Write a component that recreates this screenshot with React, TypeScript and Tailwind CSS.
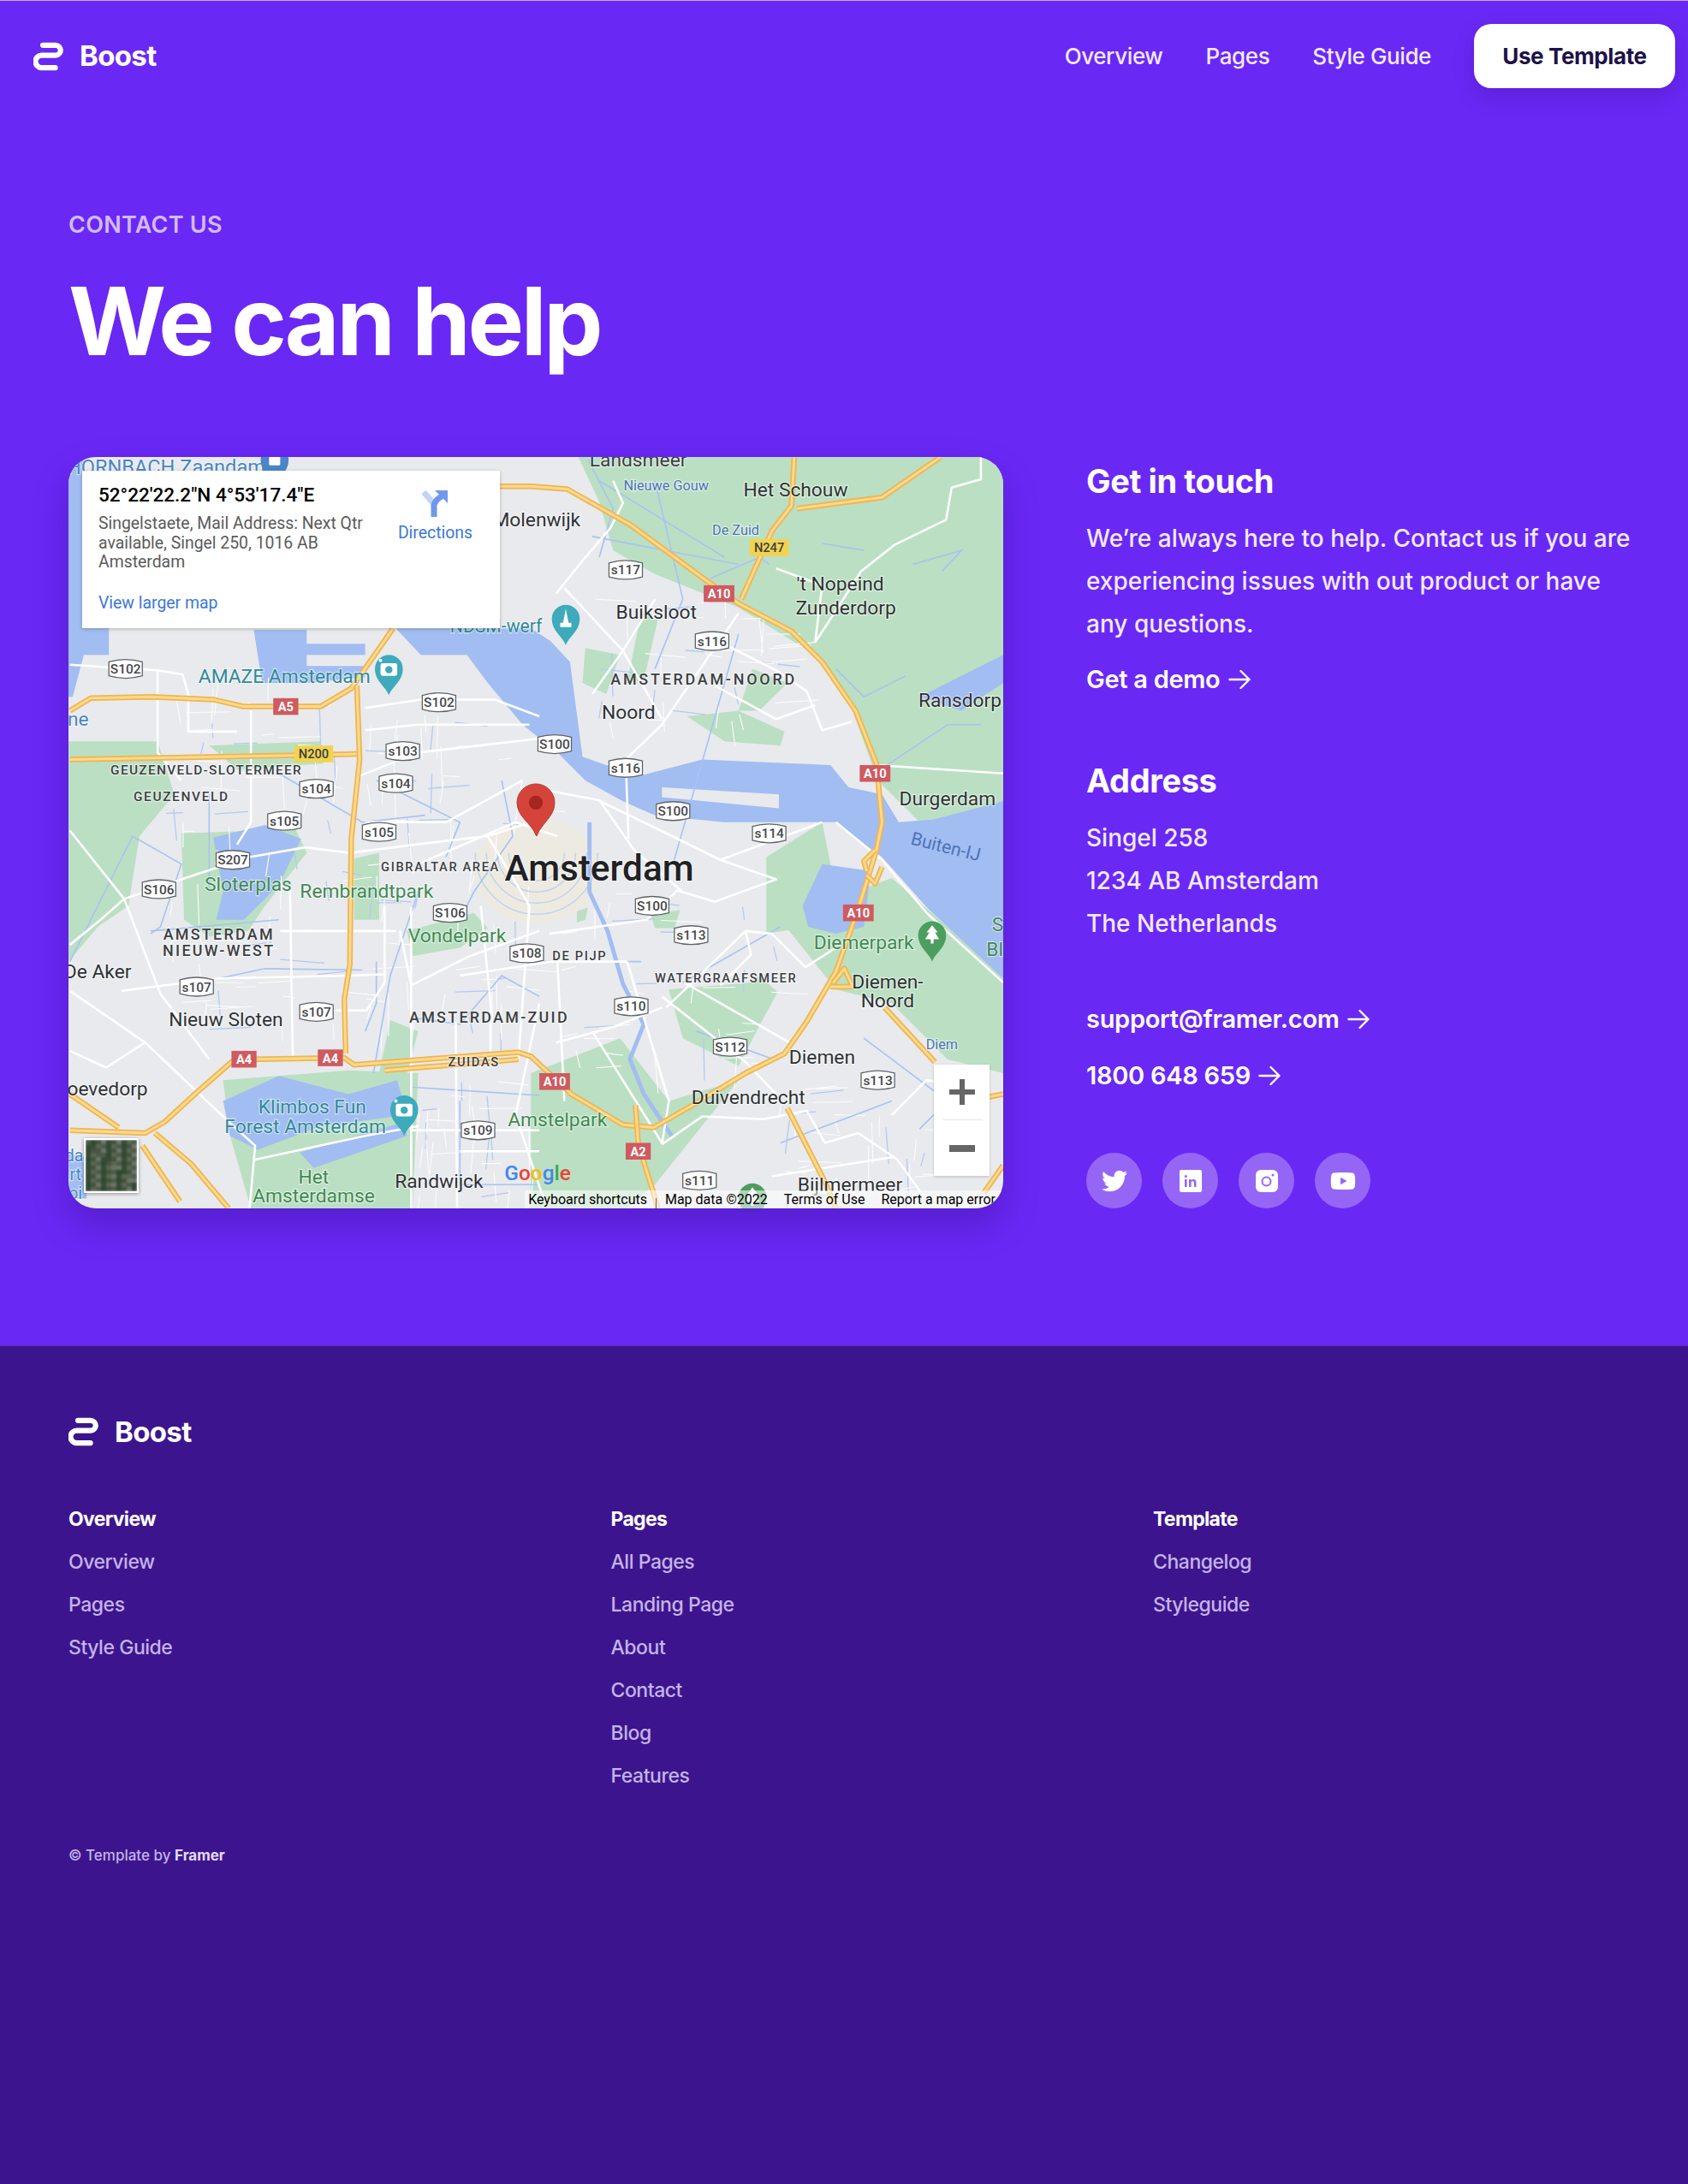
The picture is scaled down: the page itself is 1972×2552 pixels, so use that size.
import React from 'react';
import { FaTwitter, FaYoutube } from 'react-icons/fa';

type Pts = number[];

const toPoints = (p: Pts) => {
  const out: string[] = [];
  for (let i = 0; i < p.length; i += 2) out.push(`${p[i]},${p[i + 1]}`);
  return out.join(' ');
};

// map geometry is in the coordinates of a 1212px wide picture, see viewBox
const greens: Pts[] = [
  [415, 328, 720, 328, 720, 580, 660, 590, 630, 560, 610, 505, 585, 470, 530, 436, 470, 412, 440, 395, 430, 360],
  [49, 532, 113, 532, 125, 570, 100, 600, 92, 650, 70, 665, 49, 690],
  [150, 535, 230, 532, 232, 548, 170, 552],
  [130, 598, 212, 595, 220, 612, 190, 650, 178, 668, 150, 672, 132, 660],
  [254, 616, 272, 612, 272, 660, 254, 660],
  [292, 668, 340, 655, 350, 666, 330, 680, 296, 686],
  [160, 775, 250, 768, 300, 770, 296, 867, 180, 867, 165, 815],
  [280, 732, 300, 740, 292, 770, 272, 770],
  [381, 770, 445, 745, 480, 790, 530, 775, 470, 850, 450, 867, 381, 867],
  [480, 710, 540, 705, 548, 730, 530, 765, 490, 745],
  [515, 725, 545, 700, 558, 712, 540, 745],
  [560, 660, 640, 630, 720, 700, 720, 770, 680, 760, 640, 720, 600, 710],
  [414, 654, 422, 651, 420, 660, 414, 662],
  [467, 656, 488, 653, 484, 666, 470, 666],
  [460, 440, 472, 445, 462, 488, 450, 490],
  [420, 465, 445, 470, 435, 498, 418, 490],
  [493, 514, 530, 510, 563, 525, 560, 535, 520, 532],
  [540, 480, 565, 490, 545, 510, 530, 510],
  [550, 615, 590, 590, 600, 640, 580, 665, 550, 670],
];

const waters: Pts[] = [
  [49, 328, 60, 328, 60, 400, 78, 440, 78, 470, 60, 470, 52, 500, 49, 500],
  [182, 452, 220, 452, 220, 462, 262, 462, 262, 470, 220, 470, 220, 478, 262, 478, 262, 486, 220, 490, 188, 490],
  [284, 451, 381, 451, 395, 460, 409, 475, 418, 543, 458, 557, 504, 545, 596, 549, 609, 565, 633, 570, 645, 590, 670, 588, 720, 575, 720, 702, 666, 652, 633, 615, 612, 600, 600, 590, 520, 590, 470, 585, 447, 575, 420, 560, 400, 540, 375, 520, 350, 490, 335, 470, 302, 470],
  [590, 620, 625, 625, 620, 665, 600, 670, 580, 665, 576, 650],
  [153, 601, 190, 592, 216, 602, 200, 635, 175, 660, 155, 660, 160, 640],
  [160, 790, 200, 772, 250, 785, 285, 775, 292, 800, 230, 808, 185, 825, 165, 815],
  [215, 827, 290, 805, 292, 815, 225, 838],
  [50, 860, 62, 860, 62, 830, 49, 828],
  [660, 500, 720, 470, 720, 490, 690, 510],
];

const canals: Pts[] = [
  [422, 330, 440, 365, 430, 400],
  [430, 345, 520, 400],
  [470, 345, 490, 430, 470, 480],
  [425, 385, 530, 405],
  [510, 415, 545, 400, 552, 405],
  [590, 390, 620, 395],
  [655, 405, 690, 395, 676, 410],
  [600, 480, 620, 500, 650, 485],
  [620, 560, 680, 520, 704, 520],
  [483, 620, 530, 455],
  [50, 690, 95, 600, 130, 620, 115, 665, 108, 670],
  [108, 668, 200, 660],
  [157, 702, 190, 695, 260, 696],
  [295, 730, 330, 735, 360, 700, 387, 715],
  [300, 640, 280, 700, 268, 770],
  [270, 690, 270, 720, 262, 740],
  [150, 570, 150, 640],
  [200, 555, 260, 590, 305, 585],
  [270, 560, 330, 590, 320, 615],
  [360, 560, 368, 600, 340, 640, 330, 660],
  [295, 780, 387, 786],
  [330, 790, 330, 850, 387, 850],
  [490, 705, 560, 665],
  [500, 740, 555, 760],
  [390, 690, 460, 690],
  [560, 820, 640, 790],
  [620, 745, 680, 790, 660, 810],
];

const whiteRoads: Pts[] = [
  [50, 477, 113, 481, 131, 484, 135, 498],
  [262, 508, 302, 502, 355, 502, 387, 514],
  [113, 481, 113, 540, 130, 560],
  [180, 510, 180, 590, 170, 606],
  [135, 498, 135, 525, 170, 525],
  [262, 524, 300, 520, 380, 520],
  [300, 540, 387, 530],
  [255, 558, 300, 540],
  [262, 590, 320, 590, 375, 560],
  [50, 678, 72, 660, 89, 645, 142, 627, 179, 615, 219, 608, 251, 612, 306, 605, 350, 600, 381, 590],
  [87, 711, 157, 702, 251, 700, 276, 699],
  [201, 668, 284, 668],
  [208, 637, 210, 760],
  [50, 596, 89, 645, 115, 713, 150, 760],
  [50, 711, 104, 748, 162, 803, 183, 822, 179, 867],
  [104, 748, 76, 766, 50, 754],
  [241, 725, 263, 725, 276, 705, 276, 650],
  [295, 707, 337, 686, 387, 668],
  [295, 651, 295, 867],
  [327, 733, 328, 867],
  [287, 668, 295, 707],
  [295, 811, 387, 811],
  [330, 826, 387, 826],
  [183, 832, 262, 815, 300, 808],
  [300, 620, 370, 590, 400, 600],
  [350, 600, 380, 650, 372, 760],
  [345, 650, 352, 720, 352, 760],
  [387, 720, 370, 800, 390, 860],
  [330, 700, 395, 690, 450, 690],
  [530, 440, 475, 520, 449, 545, 451, 602],
  [405, 422, 447, 467, 475, 516],
  [521, 463, 557, 481, 579, 496, 590, 524, 611, 518],
  [513, 492, 557, 516, 585, 506],
  [425, 498, 447, 467, 470, 430],
  [399, 426, 420, 400, 438, 379, 447, 361, 440, 345],
  [557, 408, 590, 420, 585, 461],
  [642, 391, 679, 373, 683, 350, 704, 344, 704, 328],
  [642, 391, 618, 410, 600, 438, 585, 461],
  [629, 549, 720, 555],
  [600, 590, 633, 617, 666, 656, 720, 705],
  [381, 565, 429, 574, 517, 617, 557, 631, 513, 647, 486, 639, 464, 660, 394, 670],
  [430, 574, 455, 610, 490, 640],
  [517, 617, 590, 590],
  [478, 723, 535, 668, 539, 685, 517, 707],
  [491, 705, 570, 750],
  [535, 668, 554, 670, 578, 694, 600, 680],
  [475, 715, 535, 762, 557, 785],
  [399, 748, 440, 737, 475, 723],
  [400, 690, 405, 790],
  [475, 821, 504, 801, 548, 803, 579, 797, 592, 820, 616, 813, 644, 832, 664, 860],
  [554, 844, 642, 830],
  [450, 690, 480, 790, 475, 821],
  [600, 845, 600, 867],
  [640, 800, 665, 775, 700, 780],
  [425, 740, 475, 820],
];

const roads: Pts[] = [
  [358, 349, 381, 349, 407, 351, 453, 377, 506, 416, 530, 433, 568, 453, 590, 475, 614, 510, 629, 548, 633, 590, 629, 610, 616, 652, 600, 697, 579, 733, 563, 756, 535, 770, 497, 793, 469, 809, 447, 807, 410, 785, 381, 758, 372, 755, 306, 760, 254, 764, 247, 759, 183, 760, 166, 762, 142, 783, 118, 805, 104, 813, 50, 811],
  [50, 510, 65, 501, 109, 500, 153, 502, 175, 507, 230, 507, 252, 494, 282, 451],
  [50, 545, 212, 542, 256, 541],
  [256, 492, 258, 545, 252, 602, 251, 692, 247, 717, 248, 756],
  [570, 328, 568, 363, 554, 381, 532, 430],
  [572, 365, 633, 357, 675, 328],
  [50, 785, 85, 809],
  [111, 813, 137, 835, 164, 867],
  [102, 822, 129, 862],
  [456, 793, 458, 821, 469, 856, 472, 867],
  [565, 795, 592, 848, 600, 867],
  [635, 723, 671, 762],
  [720, 836, 706, 856],
  [710, 787, 720, 785],
  [276, 768, 350, 762, 372, 760],
  [622, 625, 620, 618, 628, 610],
  [633, 622, 628, 634, 622, 628],
  [598, 705, 606, 695, 612, 708, 596, 708],
];

type Label = [number, number, string, number, string?, number?, number?];
const dark = '#3c4043';
const ink = '#2f3235';
const park = '#3f8a53';
const poi = '#2f8a9a';
const water = '#4a74b8';
const transit = '#4a86c8';

// x centre, baseline, text, size, colour, weight, letter spacing
const labels: Label[] = [
  [119, 340, 'HORNBACH Zaandam', 14.5, transit],
  [458, 335, 'Landsmeer', 14, dark],
  [478, 352, 'Nieuwe Gouw', 10, water],
  [528, 384, 'De Zuid', 10, water],
  [571, 356, 'Het Schouw', 14, ink],
  [385, 378, 'Molenwijk', 14, ink],
  [603, 424, "'t Nopeind", 14, ink],
  [607, 441, 'Zunderdorp', 14, ink],
  [471, 444, 'Buiksloot', 14, ink],
  [505, 491, 'AMSTERDAM-NOORD', 11, dark, 500, 1.7],
  [451, 516, 'Noord', 14, ink],
  [689, 507, 'Ransdorp', 14, ink],
  [680, 578, 'Durgerdam', 14, ink],
  [356, 454, 'NDSM-werf', 13, poi],
  [204, 490, 'AMAZE Amsterdam', 14, poi],
  [148, 556, 'GEUZENVELD-SLOTERMEER', 9.5, dark, 500, 0.8],
  [130, 575, 'GEUZENVELD', 9.5, dark, 500, 1],
  [178, 639, 'Sloterplas', 14, park],
  [263, 644, 'Rembrandtpark', 14, park],
  [316, 625, 'GIBRALTAR AREA', 9, dark, 500, 1],
  [430, 632, 'Amsterdam', 26, '#202124', 500],
  [328, 676, 'Vondelpark', 14, park],
  [157, 674, 'AMSTERDAM', 11, dark, 500, 1.4],
  [157, 686, 'NIEUW-WEST', 11, dark, 500, 1.4],
  [70, 702, 'De Aker', 14, ink],
  [162, 736, 'Nieuw Sloten', 14, ink],
  [351, 734, 'AMSTERDAM-ZUID', 11, dark, 500, 1.4],
  [416, 689, 'DE PIJP', 9, dark, 500, 1],
  [521, 705, 'WATERGRAAFSMEER', 9, dark, 500, 1],
  [340, 765, 'ZUIDAS', 9, dark, 500, 1],
  [77, 786, 'oevedorp', 14, ink],
  [224, 799, 'Klimbos Fun', 14, poi],
  [219, 813, 'Forest Amsterdam', 14, poi],
  [225, 849, 'Het', 14, park],
  [225, 863, 'Amsterdamse', 14, park],
  [315, 852, 'Randwijck', 14, ink],
  [400, 808, 'Amstelpark', 14, park],
  [537, 792, 'Duivendrecht', 14, ink],
  [590, 763, 'Diemen', 14, ink],
  [637, 709, 'Diemen-', 14, ink],
  [637, 723, 'Noord', 14, ink],
  [620, 681, 'Diemerpark', 14, park],
  [676, 753, 'Diem', 10, water],
  [610, 855, 'Bijlmermeer', 14, ink],
  [56, 521, 'ne', 14, transit],
  [716, 668, 'S', 14, park],
  [714, 686, 'Bl', 14, park],
  [53, 833, 'da', 12, transit],
  [54, 847, 'rt', 12, transit],
  [54, 860, 'oi', 12, transit],
];

const shields: [number, number, string][] = [
  [90, 480, 'S102'], [315, 504, 'S102'], [289, 539, 's103'], [227, 566, 's104'], [284, 562, 's104'],
  [204, 589, 's105'], [272, 597, 's105'], [167, 617, 'S207'], [114, 638, 'S106'], [323, 655, 'S106'],
  [141, 708, 's107'], [227, 726, 's107'], [378, 684, 's108'], [449, 409, 's117'], [511, 460, 's116'],
  [449, 551, 's116'], [398, 534, 'S100'], [483, 582, 'S100'], [552, 598, 's114'], [468, 650, 'S100'],
  [496, 671, 's113'], [453, 722, 's110'], [524, 751, 'S112'], [630, 775, 's113'], [343, 811, 's109'],
  [502, 847, 's111'],
];

const redBadges: [number, number, string][] = [
  [205, 507, 'A5'], [516, 426, 'A10'], [628, 555, 'A10'], [616, 655, 'A10'],
  [398, 776, 'A10'], [175, 760, 'A4'], [237, 759, 'A4'], [458, 826, 'A2'],
];

const yellowBadges: [number, number, string][] = [
  [225, 541, 'N200'], [552, 393, 'N247'],
];

type PinKind = 'camera' | 'tower' | 'tree' | 'shop';
const pins: [number, number, string, PinKind][] = [
  [279, 481, '#3eaabb', 'camera'], [406, 445, '#3eaabb', 'tower'], [290, 797, '#3eaabb', 'camera'],
  [669, 672, '#4c9e5f', 'tree'], [540, 860, '#4c9e5f', 'tree'], [197, 331, '#4a86c8', 'shop'],
];

function PinGlyph({ x, y, kind, color }: { x: number; y: number; kind: PinKind; color: string }) {
  if (kind === 'camera') {
    return (
      <g>
        <rect x={x - 6} y={y - 5} width="12" height="9" rx="1.5" fill="#fff" />
        <circle cx={x - 6} cy={y - 7} r="1.2" fill="#fff" />
        <circle cx={x} cy={y - 0.5} r="2.6" fill={color} />
      </g>
    );
  }
  if (kind === 'tower') return <path d={`M${x} ${y - 8} L${x + 2} ${y + 2} H${x + 4} V${y + 5} H${x - 4} V${y + 2} H${x - 2} Z`} fill="#fff" />;
  if (kind === 'tree') return <path d={`M${x} ${y - 8} L${x + 4} ${y - 3} H${x + 2} L${x + 5} ${y + 2} H${x + 1} V${y + 5} H${x - 1} V${y + 2} H${x - 5} L${x - 2} ${y - 3} H${x - 4} Z`} fill="#fff" />;
  return <rect x={x - 4} y={y - 4} width="8" height="7" rx="1" fill="#fff" />;
}

// side streets: a jittered grid per district, too fine to trace by hand
const districts = [
  [115, 482, 250, 598], [262, 510, 380, 600], [115, 605, 250, 758], [262, 610, 385, 755],
  [425, 425, 560, 520], [400, 640, 560, 775], [560, 780, 665, 860], [300, 770, 385, 860],
];

function buildStreets() {
  let seed = 17;
  const next = () => {
    seed = (seed * 9301 + 49297) % 233280;
    return seed / 233280;
  };
  const white: string[] = [];
  const blue: string[] = [];
  districts.forEach(([x0, y0, x1, y1]) => {
    for (let i = 0; i < 34; i++) {
      const x = x0 + next() * (x1 - x0);
      const y = y0 + next() * (y1 - y0);
      const len = 8 + next() * 24;
      const flat = next() > 0.5;
      const dx = flat ? len : (next() - 0.5) * 6;
      const dy = flat ? (next() - 0.5) * 6 : len;
      const d = `M${x.toFixed(1)} ${y.toFixed(1)} l${dx.toFixed(1)} ${dy.toFixed(1)}`;
      if (i % 4 === 0) blue.push(d);
      else white.push(d);
    }
  });
  return { white: white.join(' '), blue: blue.join(' ') };
}

const streets = buildStreets();

function MapArt() {
  return (
    <svg viewBox="49 328 671 539" preserveAspectRatio="none" className="block h-full w-full">
      <rect x="49" y="328" width="671" height="539" fill="#e8eaed" />
      <ellipse cx="385" cy="625" rx="45" ry="38" fill="#f6eecf" opacity="0.4" />
      {greens.map((p, i) => (
        <polygon key={i} points={toPoints(p)} fill="#bbdfc2" />
      ))}
      {waters.map((p, i) => (
        <polygon key={i} points={toPoints(p)} fill="#a2bdf2" />
      ))}
      <polygon points="475,565 559,570 559,580 475,572" fill="#e8eaed" />
      <path d={streets.blue} fill="none" stroke="#b3c9f2" strokeWidth="0.8" />
      <path d={streets.white} fill="none" stroke="#fbfbfc" strokeWidth="0.7" />
      {canals.map((p, i) => (
        <polyline key={i} points={toPoints(p)} fill="none" stroke="#a9c2f2" strokeWidth="1" />
      ))}
      <path
        d="M365 612 A20 20 0 0 0 405 612 M357 612 A28 28 0 0 0 413 612 M349 612 A36 36 0 0 0 421 612 M341 612 A44 44 0 0 0 429 612"
        fill="none"
        stroke="#a9c2f2"
        strokeOpacity="0.6"
        strokeWidth="0.9"
      />
      <polyline points="423,590 423,640 436,668 447,706 462,735 452,760 462,785 482,815" fill="none" stroke="#a2bdf2" strokeWidth="3" />
      {whiteRoads.map((p, i) => (
        <polyline key={i} points={toPoints(p)} fill="none" stroke="#ffffff" strokeWidth="1.6" strokeLinejoin="round" />
      ))}
      {roads.map((p, i) => (
        <g key={i}>
          <polyline points={toPoints(p)} fill="none" stroke="#efb54f" strokeWidth="4" strokeLinejoin="round" />
          <polyline points={toPoints(p)} fill="none" stroke="#fcd98d" strokeWidth="1.8" strokeLinejoin="round" />
        </g>
      ))}
      <g fontFamily="Roboto, sans-serif">
        {labels.map(([x, y, text, size, color, weight, spacing], i) => (
          <text
            key={i}
            x={x}
            y={y}
            textAnchor="middle"
            fontSize={size}
            fill={color || dark}
            fontWeight={weight || 400}
            letterSpacing={spacing || 0}
            stroke="#ffffff"
            strokeOpacity="0.55"
            strokeWidth="1.4"
            paintOrder="stroke"
          >
            {text}
          </text>
        ))}
        <text x="679" y="612" textAnchor="middle" fontSize="13" fill={water} transform="rotate(14 679 607)">
          Buiten-IJ
        </text>
        {shields.map(([x, y, text], i) => (
          <g key={i}>
            <path
              d={`M${x - 12} ${y - 5} Q${x} ${y - 8.5} ${x + 12} ${y - 5} V${y + 5} Q${x} ${y + 8.5} ${x - 12} ${y + 5} Z`}
              fill="#ffffff"
              stroke="#5f6368"
              strokeWidth="0.8"
            />
            <text x={x} y={y + 3.4} textAnchor="middle" fontSize="9.5" fill="#45484c" fontWeight={500}>
              {text}
            </text>
          </g>
        ))}
        {redBadges.map(([x, y, text], i) => (
          <g key={i}>
            <rect x={x - (text.length > 2 ? 11 : 9)} y={y - 6} width={text.length > 2 ? 22 : 18} height="12" fill="#cf5a60" />
            <text x={x} y={y + 3.4} textAnchor="middle" fontSize="9" fill="#ffffff" fontWeight={700}>
              {text}
            </text>
          </g>
        ))}
        {yellowBadges.map(([x, y, text], i) => (
          <g key={i}>
            <rect x={x - 14} y={y - 6} width="28" height="12" fill="#f3d34e" />
            <text x={x} y={y + 3.4} textAnchor="middle" fontSize="9" fill="#3c4043" fontWeight={500}>
              {text}
            </text>
          </g>
        ))}
        <text x="362" y="847" fontSize="15" fontWeight={500}>
          <tspan fill="#4285f4">G</tspan>
          <tspan fill="#ea4335">o</tspan>
          <tspan fill="#fbbc05">o</tspan>
          <tspan fill="#4285f4">g</tspan>
          <tspan fill="#34a853">l</tspan>
          <tspan fill="#ea4335">e</tspan>
        </text>
      </g>
      {pins.map(([x, y, color, kind], i) => (
        <g key={i}>
          <path d={`M${x} ${y + 18} C${x - 2} ${y + 12} ${x - 10} ${y + 8} ${x - 10} ${y - 1} A10 10 0 0 1 ${x + 10} ${y - 1} C${x + 10} ${y + 8} ${x + 2} ${y + 12} ${x} ${y + 18} Z`} fill={color} />
          <PinGlyph x={x} y={y} kind={kind} color={color} />
        </g>
      ))}
      <path d="M385 600 C381 590 371 586 371 576 A13.5 13.5 0 0 1 398 576 C398 586 389 590 385 600 Z" fill="#d5443a" stroke="#b8352d" strokeWidth="0.6" />
      <circle cx="384.5" cy="576" r="5" fill="#a3271f" />
    </svg>
  );
}

const thumbCells = Array.from({ length: 120 }, (_, i) => ['#4b5c48', '#5a6650', '#3a4a38', '#6b7568', '#45533f', '#2f4a2f'][(i * 7 + (i % 5) * 3 + (i % 11)) % 6]);

function InfoCard() {
  return (
    <div className="absolute left-[16px] top-[16px] flex h-[184px] w-[488px] justify-between bg-white pl-[19px] pr-[32px] pt-[15px] font-['Roboto',sans-serif] shadow-[0_1px_4px_rgba(0,0,0,0.25)]">
      <div>
        <div className="text-[22.5px] font-medium leading-[26px] text-black">52°22'22.2"N 4°53'17.4"E</div>
        <div className="mt-[10px] w-[330px] text-[19.4px] leading-[22.6px] text-[#5b5b5b]">
          Singelstaete, Mail Address: Next Qtr available, Singel 250, 1016 AB Amsterdam
        </div>
        <div className="mt-[25px] text-[19.4px] leading-[22px] text-[#3a78d8]">View larger map</div>
      </div>
      <div className="flex flex-col items-center pt-[7px]">
        <svg width="32" height="32" viewBox="0 0 32 32">
          <path d="M3 3 L15 17" fill="none" stroke="#c3d3f5" strokeWidth="7" />
          <path d="M15 32 V20 Q15 13 24 8" fill="none" stroke="#6f97ee" strokeWidth="7" />
          <path d="M16 1 H31 V16 Z" fill="#6f97ee" />
        </svg>
        <div className="mt-[8px] text-[19.4px] leading-[22px] text-[#3a78d8]">Directions</div>
      </div>
    </div>
  );
}

function MapBlock() {
  return (
    <div className="relative h-[878px] w-[1092px] shrink-0 overflow-hidden rounded-[32px] shadow-[0_20px_40px_rgba(40,10,120,0.3)]">
      <MapArt />
      <InfoCard />
      <div className="absolute bottom-[18px] left-[18px] h-[64px] w-[64px] overflow-hidden border-2 border-white shadow-[0_1px_4px_rgba(0,0,0,0.4)]">
        <div className="grid h-full w-full grid-cols-[repeat(10,1fr)] grid-rows-[repeat(12,1fr)] blur-[1px]">
          {thumbCells.map((c, i) => (
            <div key={i} style={{ backgroundColor: c }} />
          ))}
        </div>
      </div>
      <div className="absolute bottom-[38px] right-[16px] flex h-[130px] w-[65px] flex-col items-center bg-white text-[#666666] shadow-[0_1px_3px_rgba(0,0,0,0.2)]">
        <div className="flex h-[64px] items-center">
          <svg width="30" height="30" viewBox="0 0 30 30"><path d="M0 15 H30 M15 0 V30" stroke="currentColor" strokeWidth="6" /></svg>
        </div>
        <div className="h-px w-[46px] bg-[#e4e4e4]" />
        <div className="flex h-[65px] items-center">
          <svg width="30" height="8" viewBox="0 0 30 8"><rect width="30" height="8" fill="currentColor" /></svg>
        </div>
      </div>
      <div className="absolute bottom-0 right-0 flex h-[21px] items-center whitespace-nowrap bg-white/55 pl-[4px] pr-[9px] font-['Roboto',sans-serif] text-[16px] text-black">
        <span>Keyboard shortcuts</span>
        <span className="mx-[10px] h-[12px] w-px self-end bg-[#666]" />
        <span className="mr-[19px]">Map data ©2022</span>
        <span className="mr-[19px]">Terms of Use</span>
        <span>Report a map error</span>
      </div>
    </div>
  );
}

function Logo({ text }: { text: string }) {
  return (
    <div className="flex items-center gap-[16px]">
      <svg width="38" height="34" viewBox="28 26 110 96" fill="none" className="shrink-0">
        <path d="M60 36 H103 A17 17 0 0 1 103 70 H56 A21 21 0 0 0 56 112 H102" stroke="#fff" strokeWidth="18" strokeLinecap="round" />
      </svg>
      <span className="text-[33px] font-bold leading-none tracking-[-0.02em] text-white">{text}</span>
    </div>
  );
}

function ArrowLink({ children, className }: { children: React.ReactNode; className?: string }) {
  return (
    <a className={`flex items-center gap-[9px] text-[29px] font-semibold leading-[40px] tracking-[-0.01em] text-white ${className || ''}`}>
      {children}
      <svg width="26" height="24" viewBox="0 0 26 24" fill="none" stroke="currentColor" strokeWidth="2.4" strokeLinecap="round" strokeLinejoin="round">
        <path d="M1.5 12 H24.5 M14.5 2 L24.5 12 L14.5 22" />
      </svg>
    </a>
  );
}

function Social({ children }: { children: React.ReactNode }) {
  return <div className="flex h-[65px] w-[65px] items-center justify-center rounded-full bg-[#9566f5] text-white">{children}</div>;
}

function FooterColumn({ title, links }: { title: string; links: string[] }) {
  return (
    <div className="w-[633.5px] shrink-0">
      <div className="text-[23px] font-bold leading-[30px] tracking-[-0.03em] text-white">{title}</div>
      <ul className="mt-[20px] flex flex-col gap-[20px]">
        {links.map((l) => (
          <li key={l} className="text-[23px] font-medium leading-[30px] tracking-[-0.02em] text-[#c5b3ea]">{l}</li>
        ))}
      </ul>
    </div>
  );
}

export default function App() {
  return (
    <div className="flex min-h-[2552px] flex-col bg-[#3c158e] font-['Inter',sans-serif]">
      <div className="border-t border-[#c9a8fb] bg-[#6a28f5]">
        <header className="flex h-[129px] items-center justify-between pl-[39px] pr-[15px]">
          <Logo text="Boost" />
          <nav className="flex items-center text-[26px] font-medium tracking-[-0.015em] text-[#f1eafe]">
            <a className="mr-[50px]">Overview</a>
            <a className="mr-[50px]">Pages</a>
            <a className="mr-[50px]">Style Guide</a>
            <a className="flex h-[75px] w-[235px] items-center justify-center rounded-[20px] bg-white font-bold text-[#1c1248] shadow-[0_10px_24px_rgba(30,10,90,0.2)]">
              Use Template
            </a>
          </nav>
        </header>
        <main className="pb-[160px] pl-[80px] pr-[20px]">
          <div className="pt-[117px] text-[27px] font-semibold leading-[32px] tracking-[0.01em] text-[#d2bbfb]">CONTACT US</div>
          <h1 className="mt-[28px] text-[110px] font-bold leading-[136px] tracking-[-0.03em] text-white">We can help</h1>
          <div className="mt-[91px] flex gap-[97px]">
            <MapBlock />
            <div className="flex-1 text-white">
              <h2 className="mt-[4px] text-[38px] font-bold leading-[48px] tracking-[-0.01em]">Get in touch</h2>
              <p className="mt-[18px] w-[645px] text-[28px] font-medium leading-[50px] text-[#f1eafe]">
                We’re always here to help. Contact us if you are experiencing issues with out product or have any questions.
              </p>
              <ArrowLink className="mt-[20px]">Get a demo</ArrowLink>
              <h2 className="mt-[74px] text-[38px] font-bold leading-[48px] tracking-[-0.01em]">Address</h2>
              <p className="mt-[18px] text-[28px] font-medium leading-[50px] text-[#f1eafe]">
                Singel 258<br />1234 AB Amsterdam<br />The Netherlands
              </p>
              <ArrowLink className="mt-[67px]">support@framer.com</ArrowLink>
              <ArrowLink className="mt-[26px]">1800 648 659</ArrowLink>
              <div className="mt-[70px] flex gap-[24px]">
                <Social><FaTwitter size={30} /></Social>
                <Social>
                  <svg width="26" height="26" viewBox="0 0 26 26">
                    <rect width="26" height="26" rx="2" fill="#fff" />
                    <rect x="6" y="11" width="2.6" height="9" fill="#9566f5" />
                    <circle cx="7.3" cy="7.6" r="1.5" fill="#9566f5" />
                    <path d="M11 20 V11 H13.5 V12.4 C14.5 10.6 19.5 10 19.5 14.5 V20 H17 V15 C17 12.8 13.6 12.8 13.6 15 V20 Z" fill="#9566f5" />
                  </svg>
                </Social>
                <Social>
                  <svg width="26" height="26" viewBox="0 0 26 26">
                    <rect width="26" height="26" rx="6" fill="#fff" />
                    <circle cx="12.5" cy="13.5" r="5" fill="none" stroke="#9566f5" strokeWidth="2" />
                    <circle cx="20" cy="6" r="1.5" fill="#9566f5" />
                  </svg>
                </Social>
                <Social><FaYoutube size={30} /></Social>
              </div>
            </div>
          </div>
        </main>
      </div>
      <footer className="flex-1 border-t border-[#5a2fb0] bg-[#3c158e] px-[80px] pt-[83px]">
        <Logo text="Boost" />
        <div className="mt-[70px] flex">
          <FooterColumn title="Overview" links={['Overview', 'Pages', 'Style Guide']} />
          <FooterColumn title="Pages" links={['All Pages', 'Landing Page', 'About', 'Contact', 'Blog', 'Features']} />
          <FooterColumn title="Template" links={['Changelog', 'Styleguide']} />
        </div>
        <div className="mt-[66px] text-[17px] font-medium text-[#c5b3ea]">
          © Template by <span className="font-bold text-[#e6dcf8]">Framer</span>
        </div>
      </footer>
    </div>
  );
}
